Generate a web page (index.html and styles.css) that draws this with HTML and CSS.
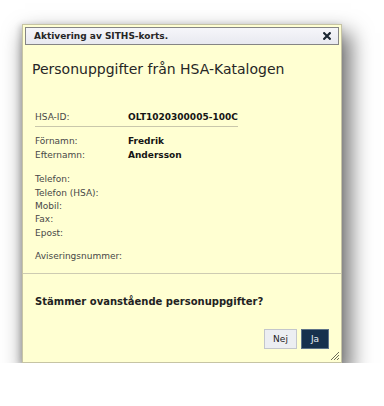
FILE: index.html
```html
<!DOCTYPE html>
<html lang="sv">
<head>
<meta charset="utf-8">
<title>Aktivering av SITHS-korts.</title>
<link rel="stylesheet" href="styles.css">
</head>
<body>
<div class="page">
  <div class="dialog">
    <div class="titlebar">
      <span class="title">Aktivering av SITHS-korts.</span>
      <svg class="close" width="8" height="8" viewBox="0 0 8 8"><path d="M1.2 1.2L6.8 6.8M6.8 1.2L1.2 6.8" stroke="#1c2733" stroke-width="2.2" stroke-linecap="square"/></svg>
    </div>
    <div class="content">
      <h1 class="heading">Personuppgifter från HSA-Katalogen</h1>
      <div class="idrow">
        <span class="label">HSA-ID:</span><span class="value">OLT1020300005-100C</span>
      </div>
      <div class="group g1">
        <div class="row"><span class="label">Förnamn:</span><span class="value">Fredrik</span></div>
        <div class="row"><span class="label">Efternamn:</span><span class="value">Andersson</span></div>
      </div>
      <div class="group g2">
        <div class="row"><span class="label">Telefon:</span></div>
        <div class="row"><span class="label">Telefon (HSA):</span></div>
        <div class="row"><span class="label">Mobil:</span></div>
        <div class="row"><span class="label">Fax:</span></div>
        <div class="row"><span class="label">Epost:</span></div>
      </div>
      <div class="group g3">
        <div class="row"><span class="label">Aviseringsnummer:</span></div>
      </div>
    </div>
    <div class="sep"></div>
    <p class="question">Stämmer ovanstående personuppgifter?</p>
    <div class="buttons">
      <button class="btn btn-no">Nej</button>
      <button class="btn btn-yes">Ja</button>
    </div>
    <svg class="grip" width="11" height="11" viewBox="0 0 11 11"><path d="M10 2L2 10M10 5L5 10M10 8L8 10" stroke="#6b6b5a" stroke-width="1"/></svg>
  </div>
</div>
</body>
</html>
```
FILE: styles.css
```css
html, body {
  margin: 0;
  padding: 0;
  background: #ffffff;
}
.page {
  padding: 24px 0 0 22px;
}
.dialog {
  position: relative;
  box-sizing: border-box;
  width: 320px;
  height: 339px;
  border: 1px solid #c6c4a4;
  background: #ffffd2;
  box-shadow: 6px 12px 20px 3px rgba(0, 0, 0, 0.55), -2px 1px 6px rgba(0, 0, 0, 0.18);
  display: flex;
  flex-direction: column;
  font-family: "DejaVu Sans", Verdana, sans-serif;
  color: #333;
}
.titlebar {
  box-sizing: border-box;
  height: 18px;
  margin: 2px 2px 0 2px;
  border: 1px solid #858585;
  background: linear-gradient(#f6f6fa, #e8e9f0);
  display: flex;
  align-items: center;
  justify-content: space-between;
  padding: 0 7px 0 8px;
}
.title {
  font-size: 9px;
  font-weight: bold;
  color: #262626;
}
.close {
  display: block;
}
.content {
  padding-left: 12px;
}
.heading {
  margin: 16px 0 0 -3px;
  font-size: 14px;
  line-height: 17px;
  font-weight: normal;
  color: #262626;
}
.idrow {
  margin-top: 32.67px;
  width: 203px;
  padding-bottom: 2px;
  border-bottom: 1px solid #c9c7ab;
  display: grid;
  grid-template-columns: 93px auto;
  font-size: 9px;
  line-height: 13.33px;
}
.group {
  font-size: 9px;
  line-height: 13.33px;
}
.g1 { margin-top: 8.33px; }
.g2 { margin-top: 11.33px; }
.g3 { margin-top: 10px; }
.row {
  display: grid;
  grid-template-columns: 93px auto;
}
.label {
  color: #474747;
}
.value {
  font-weight: bold;
  color: #151515;
}
.sep {
  margin-top: 9.67px;
  height: 1px;
  background: #cdcbb2;
}
.question {
  margin: 20.67px 0 0 12px;
  font-size: 10px;
  line-height: 14px;
  font-weight: bold;
  color: #222;
}
.buttons {
  margin-top: 20.33px;
  padding-right: 12px;
  display: flex;
  justify-content: flex-end;
  gap: 4px;
}
.btn {
  box-sizing: border-box;
  height: 20px;
  padding: 0;
  font-family: "DejaVu Sans", Verdana, sans-serif;
  font-size: 9px;
}
.btn-no {
  width: 33px;
  background: #eceef2;
  border: 1px solid #c3c6cc;
  color: #222;
}
.btn-yes {
  width: 28px;
  background: #17314d;
  border: 1px solid #5d7288;
  color: #e8eef4;
}
.grip {
  position: absolute;
  right: 1px;
  bottom: 1px;
}
```
